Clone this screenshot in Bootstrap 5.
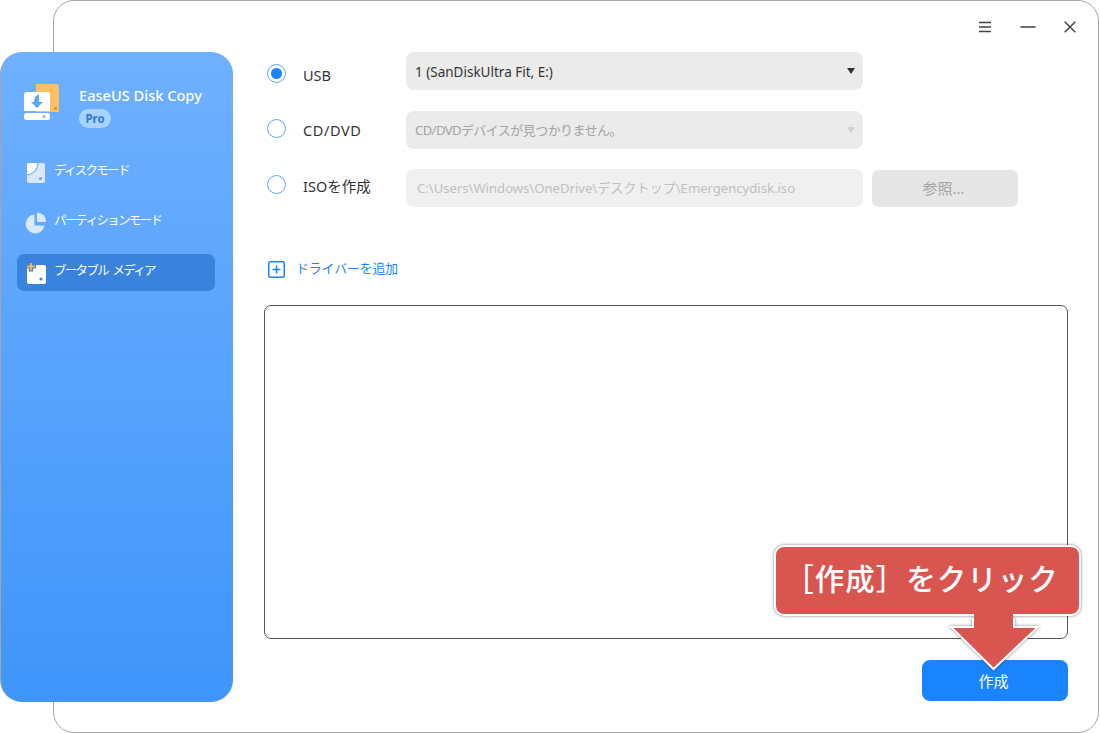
<!DOCTYPE html>
<html lang="ja">
<head>
<meta charset="utf-8">
<title>EaseUS Disk Copy</title>
<link href="https://cdn.jsdelivr.net/npm/bootstrap@5.3.0/dist/css/bootstrap.min.css" rel="stylesheet">
<style>
html,body{margin:0;height:733px;overflow:hidden;background:#fff}
body{font-family:"Noto Sans","Noto Sans CJK JP",sans-serif;font-size:14px;color:#333}
.stage{position:relative;width:1100px;height:733px}
.side-panel{position:relative;z-index:2;flex:0 0 233px;width:233px;height:650px;margin-top:52px;background:linear-gradient(180deg,#6fb0ff 0%,#3f95fb 100%);border-radius:22px;border-left:1px solid #a5a5a5;color:#fff;padding:0 18px 0 16px}
.app-window{flex:0 0 1046px;width:1046px;height:733px;margin-left:-180px;background:#fff;border:1px solid #a6a6a6;border-radius:21px;padding:0 30px 0 210px;display:flex;flex-direction:column}
.brand-row{height:90px;padding:32px 0 0 7px;gap:15px}
.brand-icon{flex:none}
.brand-name{font-size:14.6px;line-height:20px;font-weight:500;white-space:nowrap;margin-top:1px}
.pro-tag{display:block;width:32px;height:19px;margin-top:4px;border-radius:10px;background:#a6d3ff;color:#3577cf;font-size:11.5px;font-weight:700;line-height:19px;text-align:center}
.mode-list{padding-top:12px}
.mode-item{height:37px;margin-bottom:13px;border-radius:7px;padding-left:9px;font-size:12.5px;letter-spacing:-1.7px;word-spacing:3px;white-space:nowrap;gap:8px}
.mode-item.wide{padding-left:8px}
.mode-item.is-on{background:#3a83dc;padding-left:8px;gap:7px}
.mode-item svg{flex:none}
.mode-item span{margin-bottom:2px}
.title-bar{height:51px;gap:28px;margin-right:-8px}
.opt-row{height:38px;margin-bottom:21px}
.opt-row.second{margin-bottom:20px}
.opt-row.third{margin-bottom:0}
.radio-dot{flex:none;width:19px;height:19px;margin-left:3px;border:1.5px solid #5aa5ff;border-radius:50%;background:#fff;padding:2.5px}
.radio-dot.on::after{content:"";display:block;width:11px;height:11px;border-radius:50%;background:#1a84ff}
.opt-label{flex:none;width:120px;padding-left:17px;font-size:14.5px;line-height:22px;color:#333}
.opt-label.spaced{letter-spacing:.6px}
.drop-a{margin-top:12px}
.drop-b{margin-top:8px}
.drop-c{margin-top:6px}
.fake-select{flex:none;width:457px;height:38px;background:#ebebeb;border-radius:8px;padding:0 8px 0 9px;font-size:13.5px;color:#333;white-space:nowrap}
.fake-select.off{color:#a3a3a3;font-size:13px;letter-spacing:-.55px}
.fake-select.ghost{background:#f0f0f0;color:#c0c0c0;font-size:13.1px;padding-left:11px}
.sel-text{margin-top:2px}
.tri{width:0;height:0;border-left:4.5px solid transparent;border-right:4.5px solid transparent;border-top:6px solid #333}
.tri.off{border-top-color:#cfcfcf}
.browse-btn{flex:none;width:146px;height:37px;margin-left:9px;margin-top:1px;background:#e6e6e6;border:0;border-radius:7px;color:#a3a3a3;font-size:15px;padding:0 3px 0 0}
.add-row{margin-top:51px;height:22px;color:#1a84ff;font-size:12.8px;padding-left:4px;gap:11px}
.log-box{width:804px;height:334px;margin-top:25px;border:1px solid #555;border-radius:7px;background:#fff}
.foot-row{width:804px}
.make-btn{width:146px;height:41px;margin-top:21px;background:#1a84ff;border:0;border-radius:8px;color:#fff;font-size:15px;padding:1px 3px 0 0}
.make-btn:hover{background:#1a84ff;color:#fff}
.callout{position:absolute;z-index:5;left:774px;top:545px;width:307px;height:71px;padding-right:12px;background:#d95550;border:2px solid #fff;border-radius:10px;box-shadow:0 0 3px rgba(0,0,0,.55);color:#fff;font-size:29.5px;font-weight:500;line-height:64px;text-align:center;white-space:nowrap;letter-spacing:1px}
.callout-arrow{position:absolute;z-index:6;left:948px;top:612px}
.arrow-head{filter:drop-shadow(0 0 1.5px rgba(0,0,0,.5))}
</style>
</head>
<body>
<div class="stage d-flex align-items-start">
  <aside class="side-panel">
    <div class="brand-row d-flex">
      <svg class="brand-icon" width="40" height="40" viewBox="0 0 40 40">
        <path d="M12 0h20a3 3 0 0 1 3 3v25H12z" fill="#ffc062"/>
        <rect x="30" y="23" width="3" height="3" fill="#e99a2e"/>
        <path d="M3 8h20a3 3 0 0 1 3 3v16H0V11a3 3 0 0 1 3-3z" fill="#fff"/>
        <path d="M15 10c-4 2-5 5-5 8H7l6 6 6-6h-4c0-3 0-5 0-8z" fill="#5ea6f5"/>
        <rect x="0" y="29" width="26" height="7" rx="2.500" fill="#fff"/>
        <circle cx="20" cy="32.500" r="1.300" fill="#5ea6f5"/>
      </svg>
      <div>
        <div class="brand-name">EaseUS Disk Copy</div>
        <span class="pro-tag">Pro</span>
      </div>
    </div>
    <div class="mode-list d-flex flex-column">
      <div class="mode-item d-flex align-items-center">
        <svg width="20" height="22" viewBox="0 0 20 22"><path d="M3 1h14a2 2 0 0 1 2 2v16a2 2 0 0 1-2 2H3a2 2 0 0 1-2-2V3a2 2 0 0 1 2-2z" fill="#d9e9fd"/><path d="M1 12C7 11 11 7 11 1H3a2 2 0 0 0-2 2z" fill="#fff"/><path d="M1 13C8 12 12 7 12 1" fill="none" stroke="#5ea6f5"/><circle cx="14.500" cy="16.500" r="1.500" fill="#5ea6f5"/></svg>
        <span>ディスクモード</span>
      </div>
      <div class="mode-item wide d-flex align-items-center">
        <svg width="21" height="22" viewBox="0 0 21 22"><path d="M9.500 2.500a9.500 9.500 0 1 0 10 11h-10z" fill="#d9e9fd"/><path d="M12 0.500a9 9 0 0 1 9 9.500h-9z" fill="#d9e9fd"/></svg>
        <span>パーティションモード</span>
      </div>
      <div class="mode-item is-on d-flex align-items-center">
        <svg width="22" height="24" viewBox="0 0 22 24"><rect x="2" y="4" width="19" height="19" rx="2" fill="#fff"/><path d="M4.500 1.500h3v2.500h3v3h-3v3h-3v-3h-3v-3h3z" fill="#ffb84d" stroke="#3a83dc" stroke-width="1.200" stroke-linejoin="round"/><circle cx="16" cy="18" r="1.600" fill="#3a83dc"/></svg>
        <span>ブータブル メディア</span>
      </div>
    </div>
  </aside>
  <main class="app-window">
    <div class="title-bar d-flex align-items-center justify-content-end">
      <svg width="14" height="14" viewBox="0 0 14 14"><path d="M1 2.500h12M1 7h12M1 11.500h12" stroke="#444" stroke-width="1.500"/></svg>
      <svg width="16" height="14" viewBox="0 0 16 14"><path d="M0.500 7h15" stroke="#555" stroke-width="1.700"/></svg>
      <svg width="12" height="12" viewBox="0 0 12 12"><path d="M.7.7l10.600 10.600M11.300.7L.7 11.300" stroke="#444" stroke-width="1.500"/></svg>
    </div>
    <div class="opt-row d-flex align-items-start">
      <span class="radio-dot on drop-a"></span>
      <span class="opt-label drop-a">USB</span>
      <div class="fake-select d-flex align-items-center justify-content-between"><span class="sel-text">1 (SanDiskUltra Fit, E:)</span><span class="tri"></span></div>
    </div>
    <div class="opt-row second d-flex align-items-start">
      <span class="radio-dot drop-b"></span>
      <span class="opt-label spaced drop-b">CD/DVD</span>
      <div class="fake-select off d-flex align-items-center justify-content-between"><span class="sel-text">CD/DVDデバイスが見つかりません。</span><span class="tri off"></span></div>
    </div>
    <div class="opt-row third d-flex align-items-start">
      <span class="radio-dot drop-c"></span>
      <span class="opt-label drop-c">ISOを作成</span>
      <div class="fake-select ghost d-flex align-items-center"><span class="sel-text">C:\Users\Windows\OneDrive\デスクトップ\Emergencydisk.iso</span></div>
      <button class="browse-btn btn" type="button">参照...</button>
    </div>
    <div class="add-row d-flex align-items-center">
      <svg width="17" height="17" viewBox="0 0 17 17"><rect x=".75" y=".75" width="15.500" height="15.500" rx="1.500" fill="none" stroke="#1a84ff" stroke-width="1.500"/><path d="M8.500 4.500v8M4.500 8.500h8" stroke="#1a84ff" stroke-width="1.600"/></svg>
      <span>ドライバーを追加</span>
    </div>
    <div class="log-box"></div>
    <div class="foot-row d-flex justify-content-end"><button class="make-btn btn" type="button">作成</button></div>
  </main>
  <div class="callout">［作成］をクリック</div>
  <svg class="callout-arrow" width="94" height="60" viewBox="0 0 94 60">
    <path class="arrow-head" d="M25 6V15H3L45.500 57 90 15H66V6" fill="#d95550" stroke="#fff" stroke-width="2"/>
    <rect x="26" y="0" width="39" height="16" fill="#d95550"/>
  </svg>
</div>
</body>
</html>
